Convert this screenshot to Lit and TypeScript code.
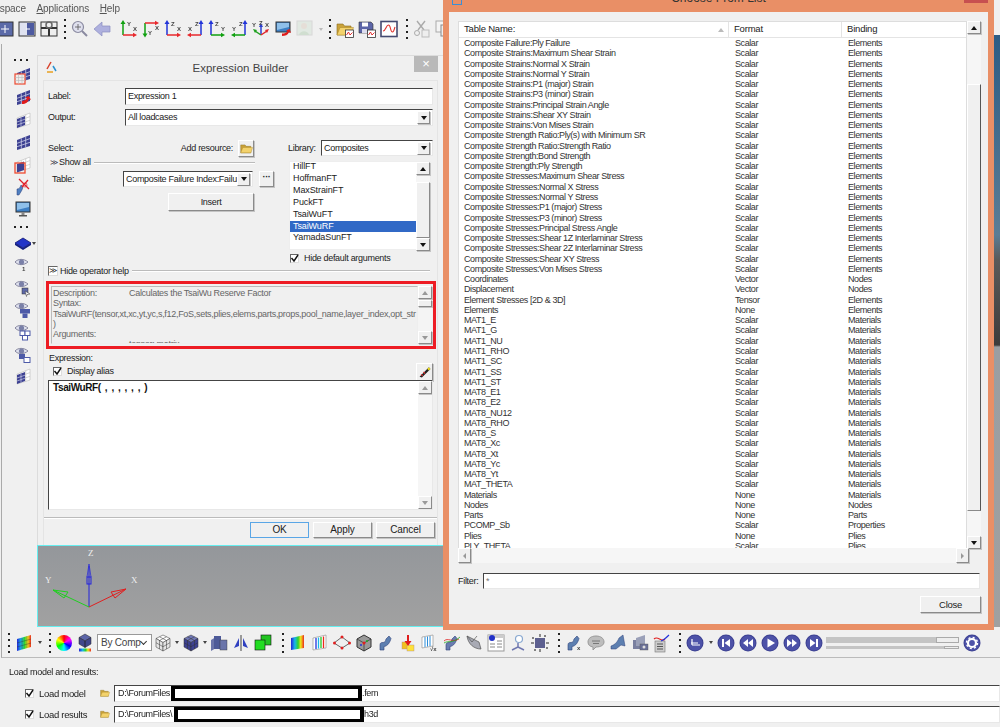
import { LitElement, html, css, svg } from "lit";
import { customElement } from "lit/decorators.js";

const BLUE = "#3d4192";

// ---- small icon helpers, all on an 18x18 box
const icon = (body: unknown, cls = "ico") => html`<svg class=${cls} viewBox="0 0 18 18">${body}</svg>`;

const mesh = (fill = BLUE, line = "#c9cbe6") => svg`
  <path d="M3 6L16 1V12L3 16Z" fill=${fill}/>
  <path d="M3 9.3L16 4.6M3 12.7L16 8.3M7.3 4.4V14.8M11.7 2.7V13.3" stroke=${line} stroke-width=".8" fill="none"/>`;

const ghost = svg`
  <path d="M3 6L16 1V12L3 16Z" fill="#fff" stroke="#bbb" stroke-width=".6"/>
  <path d="M3 9.3L16 4.6M3 12.7L16 8.3M7.3 4.4V14.8M11.7 2.7V13.3" stroke="#bbb" stroke-width=".6" fill="none"/>`;

const meshes = [
  icon(svg`${mesh()}<rect x="1" y="7" width="10" height="10" fill="#eee" stroke="#ee4a30" stroke-width="1.2"/><path d="M1 10.500H11M1 13.500H11M4.500 7V17M8 7V17" stroke="#bbb" stroke-width=".6"/>`),
  icon(svg`${mesh()}<path d="M8 15C12 15 14 13 15 10L17 11L15 7L11 8.500L13 9.500C12 11 10 12 8 12Z" fill="#e01c1c"/>`),
  icon(svg`${ghost}<path d="M3 7L11 4V13L3 16Z" fill=${BLUE}/><path d="M3 10L11 7.200M3 13L11 10.200M7 5.500V14.500" stroke="#c9cbe6" stroke-width=".7"/>`),
  icon(mesh()),
  icon(svg`${ghost}<path d="M3 8L10 5.500V14L3 16.500Z" fill=${BLUE}/><rect x="1" y="7" width="10" height="10" fill="none" stroke="#ee4a30" stroke-width="1.300"/>`),
];

const pipe = (c = "#5d7fb0") => svg`<path d="M3 16V11C3 9 4 8.500 6 8.500C8 8.500 8.500 7 9 5L12 2L14 4.500C13 8 11 12 7 12.500V16Z" fill=${c} stroke="#2d3f78" stroke-width=".6"/>`;

const monitor = (arrow = false) => icon(svg`
  <rect x="2" y="2" width="14" height="10" fill="#3d7fc4" stroke="#333" stroke-width="1"/>
  <path d="M3 3H15V7L3 10Z" fill="#8fc0ea"/>
  ${arrow
    ? svg`<path d="M8 16C11 16 14 15 15 12L17 13L15.500 9L12 10.500L13.500 11.200C12.500 13 10.500 13.500 8 13.500Z" fill="#e01c1c"/>`
    : svg`<rect x="7.500" y="12" width="3" height="3" fill="#888"/><rect x="5" y="15" width="8" height="1.500" fill="#555"/>`}`);

const eye = (extra: unknown = svg``) => icon(svg`
  <path d="M1 5C4 1.500 10 1.500 14 5C10 8.500 4 8.500 1 5Z" fill="#dfe1ee" stroke="#7a7a95" stroke-width=".9"/>
  <circle cx="7.500" cy="5" r="2.600" fill="#7a80a8"/>${extra}`);

const axis = (v: string, h: string, vl: string, hl: string, mode: number) => {
  // mode 0: up at left going right, 1: up at right going left, 2: down at left with top bar
  const t = (x: number, y: number, s: string) => svg`<text x=${x} y=${y} class="axl">${s}</text>`;
  if (mode === 0) return icon(svg`
    <path d="M3 15V3" stroke=${v} stroke-width="1.500"/><path d="M3 0L5.500 4H.5Z" fill=${v}/>
    <path d="M3 15H14" stroke=${h} stroke-width="1.500"/><path d="M17 15L13 12.700V17.300Z" fill=${h}/>
    ${t(7, 6, vl)}${t(13, 11, hl)}`);
  if (mode === 1) return icon(svg`
    <path d="M15 15V3" stroke=${v} stroke-width="1.500"/><path d="M15 0L17.500 4H12.500Z" fill=${v}/>
    <path d="M15 15H4" stroke=${h} stroke-width="1.500"/><path d="M1 15L5 12.700V17.300Z" fill=${h}/>
    ${t(9, 6, vl)}${t(2, 11, hl)}`);
  return icon(svg`
    <path d="M3 3V14" stroke=${v} stroke-width="1.500"/><path d="M3 17.500L.5 13.500H5.500Z" fill=${v}/>
    <path d="M3 3H14" stroke=${h} stroke-width="1.500"/><path d="M17 3L13 .7V5.300Z" fill=${h}/>
    ${t(6, 15, vl)}${t(13, 10, hl)}`);
};

const triad = icon(svg`
  <path d="M9 15V6" stroke="#2b3fd0" stroke-width="1.500"/><path d="M9 3L11 7H7Z" fill="#2b3fd0"/>
  <path d="M9 15L3 11" stroke="#1fa01f" stroke-width="1.500"/><path d="M9 15L15 11" stroke="#e0252a" stroke-width="1.500"/>
  <path d="M1 9L5 10L3 13Z" fill="#1fa01f"/><path d="M17 9L13 10L15 13Z" fill="#e0252a"/>
  <text x="0" y="7" class="axl">Y</text><text x="7" y="5" class="axl">Z</text><text x="13" y="7" class="axl">X</text>`);

const folder = (deco: unknown = svg``) => icon(svg`
  <path d="M1 4H7L8.500 6H15V15H1Z" fill="#c9a23a" stroke="#8a6d1e" stroke-width=".6"/>
  <path d="M1 15L4 7.500H17.500L15 15Z" fill="#f3d26c" stroke="#a98522" stroke-width=".5"/>${deco}`);

const miniChart = svg`<rect x="9.500" y="10" width="8" height="7.500" fill="#fff" stroke="#333" stroke-width=".8"/><path d="M10.500 15L12.500 12L14 15L16.500 12.500" stroke="#e01c1c" fill="none" stroke-width=".9"/>`;

const cube = (top: string, side: string, grid = false) => svg`
  <path d="M9 1L16 4.500L9 8.500L2 4.500Z" fill=${top} stroke="#333" stroke-width=".5"/>
  <path d="M2 4.500L9 8.500V17L2 13Z" fill=${side} stroke="#333" stroke-width=".5"/>
  <path d="M16 4.500L9 8.500V17L16 13Z" fill=${side} stroke="#333" stroke-width=".5"/>
  ${grid ? svg`<path d="M2 8.700L9 12.700L16 8.700M5.500 2.800L12.500 6.500M12.500 2.800L5.500 6.500M5.500 6.500V15M12.500 6.500V15" stroke="#333" stroke-width=".5" fill="none"/>` : svg``}`;

const rainbow = svg`<defs><linearGradient id="rb"><stop offset="0" stop-color="#2323d8"/><stop offset=".3" stop-color="#19b8e8"/><stop offset=".55" stop-color="#2fd12f"/><stop offset=".75" stop-color="#f2e51e"/><stop offset="1" stop-color="#ea2a1c"/></linearGradient></defs>`;

const media = (glyph: unknown) => icon(svg`
  <circle cx="9" cy="9" r="8.500" fill=${BLUE}/><circle cx="9" cy="9" r="7.500" fill="#4d52a8"/>${glyph}`, "ico round");

const rows: [string, string, string][] = [
  ...["Composite Failure:Ply Failure",
    ...["Maximum Shear", "Normal X", "Normal Y", "P1 (major)", "P3 (minor)"].map((n) => `Composite Strains:${n} Strain`),
    "Composite Strains:Principal Strain Angle", "Composite Strains:Shear XY Strain", "Composite Strains:Von Mises Strain",
    "Composite Strength Ratio:Ply(s) with Minimum SR", "Composite Strength Ratio:Strength Ratio",
    "Composite Strength:Bond Strength", "Composite Strength:Ply Strength",
    ...["Maximum Shear", "Normal X", "Normal Y", "P1 (major)", "P3 (minor)"].map((n) => `Composite Stresses:${n} Stress`),
    "Composite Stresses:Principal Stress Angle", "Composite Stresses:Shear 1Z Interlaminar Stress",
    "Composite Stresses:Shear 2Z Interlaminar Stress", "Composite Stresses:Shear XY Stress", "Composite Stresses:Von Mises Stress",
  ].map((n): [string, string, string] => [n, "Scalar", "Elements"]),
  ["Coordinates", "Vector", "Nodes"],
  ["Displacement", "Vector", "Nodes"],
  ["Element Stresses [2D & 3D]", "Tensor", "Elements"],
  ["Elements", "None", "Elements"],
  ...["MAT1_E", "MAT1_G", "MAT1_NU", "MAT1_RHO", "MAT1_SC", "MAT1_SS", "MAT1_ST", "MAT8_E1", "MAT8_E2", "MAT8_NU12",
    "MAT8_RHO", "MAT8_S", "MAT8_Xc", "MAT8_Xt", "MAT8_Yc", "MAT8_Yt", "MAT_THETA"]
    .map((n): [string, string, string] => [n, "Scalar", "Materials"]),
  ["Materials", "None", "Materials"],
  ["Nodes", "None", "Nodes"],
  ["Parts", "None", "Parts"],
  ["PCOMP_Sb", "Scalar", "Properties"],
  ["Plies", "None", "Plies"],
  ["PLY_THETA", "Scalar", "Plies"],
];

const library = ["HillFT", "HoffmanFT", "MaxStrainFT", "PuckFT", "TsaiWuFT", "TsaiWuRF", "YamadaSunFT"];

@customElement("app-root")
export class AppRoot extends LitElement {
  static styles = css`
    :host {
      display: block;
      width: 1000px;
      height: 727px;
      overflow: hidden;
      background: #f0f0f0;
      font: 9px/11px "Liberation Sans", Arial, sans-serif;
      letter-spacing: -0.3px;
      color: #222;
    }
    .screen { position: relative; width: 1000px; height: 727px; overflow: hidden; filter: blur(0.4px); }
    .ico { width: 18px; height: 18px; flex: none; display: block; overflow: visible; }
    .axl { font: bold 6px "Liberation Sans", sans-serif; fill: #444; letter-spacing: 0; }

    /* menu and top toolbar */
    .menu { height: 14px; display: flex; gap: 10.500px; align-items: center; margin-left: -23px; padding-top: 1px; font-size: 10px; color: #555; letter-spacing: -0.1px; }
    .menu u { text-decoration-thickness: 1px; }
    .tools { display: flex; align-items: center; gap: 4px; }
    .top { height: 28px; margin-left: -4px; }
    .sep { width: 2px; height: 20px; margin: 0 1px 0 2px; flex: none;
      background: repeating-linear-gradient(#222 0 2px, transparent 2px 6px); }
    .sep.wide { margin-left: 4px; }
    .sep.m5 { margin-left: 5px; }
    .sep.m6 { margin-left: 6px; }
    .arr { width: 0; height: 0; border: 2.5px solid transparent; border-top: 3px solid #444; border-bottom: 0; margin: 0 .5px; flex: none; }
    .arr.dim { border-top-color: #bbb; }
    .arr.tight { margin: 0 -1px; }
    .faded { opacity: .45; }
    .bump { margin-left: 1px; }

    /* work area */
    .work { height: 585px; display: flex; }
    .strip { width: 37px; border-left: 1px solid #aaa; margin-left: 1px; box-sizing: border-box; display: flex; flex-direction: column; align-items: center; gap: 4.2px; padding: 16px 0 0 6px; margin-top: 1px; }
    .hsep { width: 18px; height: 2px; flex: none; background: repeating-linear-gradient(90deg, #222 0 2px, transparent 2px 6px); margin: -1px 0 2px; }
    .hsep.mid { margin: 3px 0 3px; }
    .layer { display: flex; align-items: center; margin-left: 4px; }

    /* floating windows */
    .builder { position: absolute; left: 37px; top: 55px; width: 407px; height: 491px; box-sizing: border-box; background: #f0f0f0; border: 1px solid #dcdcdc; display: flex; flex-direction: column; }
    .titlebar { height: 24px; flex: none; display: flex; align-items: center; justify-content: center; font-size: 11.500px; letter-spacing: 0; color: #444; position: relative; }
    .logo { position: absolute; left: 7px; top: 5px; width: 13px; height: 13px; }
    .x { position: absolute; right: 5px; top: 0; width: 24px; height: 16px; background: #b9b9b9; color: #fff; font-size: 13px; line-height: 15px; text-align: center; }
    .panel { margin: 0 5px; padding: 7px 4px 0 4px; flex: 1; border: 1px solid #e4e4e4; border-bottom: none; display: flex; flex-direction: column; }
    .field { display: flex; align-items: center; }
    .field label { width: 77px; flex: none; }
    .sunken { background: #fff; border: 1px solid; border-color: #444 #e8e8e8 #e8e8e8 #444; box-sizing: border-box; padding: 0 2px; white-space: nowrap; overflow: hidden; }
    .input { height: 17px; line-height: 15px; flex: 1; }
    .combo { display: flex; align-items: center; justify-content: space-between; }
    .drop { width: 13px; height: 13px; flex: none; display: flex; align-items: center; justify-content: center; }
    .raised { background: #f0f0f0; border: 1px solid; border-color: #fff #8a8a8a #8a8a8a #fff; box-shadow: 1px 1px 0 #c4c4c4; box-sizing: border-box; }
    .down, .up, .lft, .rgt { width: 0; height: 0; border: 3px solid transparent; display: block; }
    .down { border-top: 4px solid #111; border-bottom: 0; }
    .up { border-bottom: 4px solid #111; border-top: 0; }
    .lft { border-right: 3px solid #999; border-left: 0; }
    .rgt { border-left: 3px solid #999; border-right: 0; }
    .mid-gap { margin-top: 4px; }

    .select { display: flex; margin-top: 14px; }
    .sel-l { width: 240px; flex: none; }
    .sel-r { width: 145px; flex: none; }
    .sel-row { display: flex; align-items: center; height: 16px; }
    .grow { flex: 1; }
    .pad34 { width: 34px; flex: none; }
    .btn-ico { width: 16px; height: 17px; flex: none; display: flex; align-items: center; justify-content: center; margin-left: 5px; }
    .btn-ico .ico { width: 13px; height: 13px; }
    .show { height: 11px; margin: 1px 0 3px 2px; display: flex; align-items: center; }
    .chev { width: 9px; flex: none; font-size: 8px; color: #334; }
    .groove { flex: 1; height: 0; border-top: 1px solid #bbb; border-bottom: 1px solid #fff; margin-left: 3px; }
    .show .groove { margin-right: 33px; }
    .hide-op .groove { margin-right: 3px; }
    .tbl { display: flex; align-items: center; height: 16px; }
    .tl { width: 75px; flex: none; padding-left: 4px; box-sizing: border-box; }
    .tbl .sunken { width: 130px; height: 16px; line-height: 14px; flex: none; }
    .tbl .sunken b { font-weight: normal; flex: 1; overflow: hidden; }
    .more { width: 15px; height: 16px; margin-left: 6px; text-align: center; font-weight: bold; line-height: 11px; flex: none; }
    .insert { width: 86px; height: 18px; margin: 6px 0 0 120px; text-align: center; line-height: 16px; }
    .lib-l { width: 33px; flex: none; }
    .lib .sunken { width: 112px; height: 16px; line-height: 14px; }
    .list { height: 87px; margin: 5px 2px 0 1px; display: flex; border: 1px solid #eee; background: #fff; }
    .list ul { margin: -1px 0 0; padding: 0 0 0 3px; list-style: none; flex: 1; letter-spacing: -0.1px; line-height: 11.900px; }
    .list li.on { background: #3169c6; color: #fff; margin-left: -3px; padding-left: 3px; }
    .sb { width: 14px; flex: none; display: flex; flex-direction: column; justify-content: space-between; background: #f6f6f6; box-sizing: border-box; }
    .sb-b { height: 13px; display: flex; align-items: center; justify-content: center; flex: none; }
    .sb-thumb { height: 56px; flex: none; margin: 7px 0 auto; }
    .chk { display: flex; align-items: center; gap: 5px; height: 10px; }
    .box { width: 9px; height: 9px; box-sizing: border-box; border: 1px solid; border-color: #666 #ddd #ddd #666; background: #fff; flex: none; }
    .box svg { display: block; width: 9px; height: 9px; margin: -1px; }
    .hide-def { margin: 3px 0 0 2px; }
    .hide-op { display: flex; align-items: center; height: 10px; margin-top: 3px; }
    .hide-op .box { width: 10px; height: 10px; margin-right: 2px; text-align: center; font-size: 8px; line-height: 7px; }

    .frame { margin: 5px -3px 0 -2px; height: 68px; flex: none; box-sizing: border-box; border: 3px solid #ed1c24; padding: 2px 1px 2px 2px; display: flex; }
    .help { flex: 1; overflow: hidden; border: 1px solid; border-color: #bbb #eee #eee #bbb; color: #666; padding: 1px 1px; line-height: 10.300px; white-space: nowrap; min-width: 0; letter-spacing: -0.3px; }
    .help i { font-style: normal; display: inline-block; width: 76px; }
    .frame .sb { background: #f4f4f4; }
    .frame .sb-thumb { height: 7px; margin-top: 1px; }
    .frame .up { border-bottom-color: #999; }
    .frame .down { border-top-color: #999; }
    .expr-label { margin: 4px 0 0 1px; height: 10px; }
    .expr-head { display: flex; align-items: center; height: 17px; padding-left: 5px; }
    .pen { width: 17px; height: 18px; flex: none; margin-left: auto; display: flex; align-items: center; justify-content: center; }
    .pen .ico { width: 14px; height: 14px; }
    .area { height: 130px; flex: none; display: flex; padding: 0; }
    .code { flex: 1; padding: 1px 4px; font: bold 10px/11px "Liberation Sans", sans-serif; letter-spacing: -0.4px; word-spacing: 1.800px; color: #111; }
    .area .sb-b { height: 13px; }
    .area .sb-thumb { visibility: hidden; }
    .area .up { border-bottom-color: #999; }
    .area .down { border-top-color: #999; }
    .groove-h { height: 0; border-top: 1px solid #bbb; border-bottom: 1px solid #fff; margin: 7px -4px 0 -4px; }
    .actions { display: flex; justify-content: flex-end; gap: 4px; margin: 3px -2px 0 0; }
    .actions .raised { width: 59px; height: 16px; text-align: center; line-height: 14px; font-size: 10px; letter-spacing: -0.1px; }
    .actions .ok { border-color: #5aa6e6; box-shadow: none; }

    .view { position: absolute; left: 37px; top: 545px; width: 407px; height: 82px; box-sizing: border-box; border: 1px solid #66eef0; border-right: none; background: linear-gradient(#94979b, #a1a1a1); }
    .view svg { display: block; width: 100px; height: 80px; }
    .view text { font: 9px "Liberation Serif", serif; fill: #eee; }

    .choose { position: absolute; left: 443px; top: -12px; width: 551px; height: 642px; box-sizing: border-box; background: #e98f66; padding: 24px 6px 6px 6px; }
    .ch-title { position: absolute; left: 0; right: 0; top: 5px; text-align: center; font-size: 12px; letter-spacing: 0; color: #333; height: 19px; }
    .ch-red { position: absolute; right: 6px; top: 0; width: 24px; height: 15px; background: #c75050; }
    .ch-logo { position: absolute; left: 9px; top: 9px; width: 10px; height: 8px; border: 1px solid #3a8fd6; border-top-color: #e0a020; box-sizing: border-box; }
    .ch-in { height: 100%; background: #f0f0f0; padding: 9px 7px 0 9px; box-sizing: border-box; display: flex; flex-direction: column; }
    .tbl-wrap { height: 542px; width: 523px; display: flex; flex: none; }
    .table { flex: 1; height: 527px; background: #fff; border: 1px solid #ddd; border-bottom: none; box-sizing: border-box; overflow: hidden; min-width: 0; }
    .thead { display: grid; grid-template-columns: 270px 113px 1fr; height: 15px; border-bottom: 1px solid #e4e4e4; font-size: 9.500px; line-height: 14px; letter-spacing: -0.2px; }
    .thead div { padding-left: 5px; border-right: 1px solid #e4e4e4; position: relative; }
    .thead div:last-child { border: none; }
    .sort { position: absolute; right: 4px; top: 6px; width: 0; height: 0; border: 3.500px solid transparent; border-bottom: 4px solid #bbb; border-top: 0; }
    .tr { display: grid; grid-template-columns: 271px 113px 1fr; height: 10.270px; line-height: 10.270px; padding-left: 5px; white-space: nowrap; color: #333; letter-spacing: -0.42px; }
    .vs { height: 528px; flex: none; }
    .vs .sb-thumb { height: 427px; margin: 25px 0 0; border-right: 1px solid #555; background: #f0f0f0; box-shadow: none; }
    .hs { height: 15px; width: 511px; flex: none; display: flex; justify-content: space-between; background: #f6f6f6; margin-top: -15px; }
    .hs .sb-b { width: 13px; height: 15px; }
    .filter { display: flex; align-items: center; margin-top: 10px; height: 16px; }
    .filter span { width: 25px; flex: none; }
    .filter .sunken { flex: 1; height: 16px; margin-right: 1px; line-height: 14px; color: #777; }
    .close { width: 61px; height: 17px; margin: 7px 0 0 auto; text-align: center; line-height: 15px; font-size: 9.500px; }

    .outside { position: absolute; left: 994px; top: 35px; width: 6px; height: 592px; background: linear-gradient(#2c5c85 0, #5b7d96 200px, #5a5a5a 225px, #3c3c3c 310px, #9a9ea2 312px, #a0a0a0 100%); }

    /* bottom */
    .bottom { height: 29px; border-bottom: 1px solid #bbb; border-left: 1px solid #aaa; margin-left: 1px; box-sizing: content-box; padding-left: 4px; position: relative; }
    .bottom .gp2 { margin-left: 3px; }
    .wheel { width: 16px; height: 16px; border-radius: 50%; flex: none; background: conic-gradient(#f00, #f0f 17%, #00f 33%, #0ff 50%, #0f0 67%, #ff0 83%, #f00); }
    .bycomp { width: 55px; height: 17px; box-sizing: border-box; border: 1px solid #999; background: #fff; font-size: 10px; padding: 0 3px; display: flex; align-items: center; justify-content: space-between; flex: none; color: #444; white-space: nowrap; margin: 0 -2px 0 -1px; letter-spacing: -0.2px; }
    .chevd { width: 4px; height: 4px; border: solid #333; border-width: 0 1px 1px 0; transform: rotate(45deg); margin: -2px 2px 0 0; }
    .round { width: 18px; height: 18px; }
    .sliders { width: 133px; flex: none; display: flex; flex-direction: column; gap: 3px; margin-left: -1px; }
    .slider { background: #c4c4c4; display: flex; justify-content: flex-end; }
    .slider.a { height: 6px; }
    .slider.b { height: 3px; }
    .slider span { display: block; background: #eee; border: 1px solid #aaa; box-sizing: border-box; }
    .slider.a span { width: 23px; }
    .slider.b span { width: 15px; }

    .load { padding: 9px 0 0 9px; }
    .load-row { display: flex; align-items: center; height: 18px; margin-left: 16px; font-size: 9.500px; }
    .load-row .box { margin-right: 5px; }
    .lb { width: 61px; flex: none; }
    .load-row .ico { width: 10px; height: 10px; }
    .path { margin-left: 4px; flex: 1; height: 17px; line-height: 15px; padding-left: 3px; display: flex; align-items: center; font-size: 9px; letter-spacing: -0.35px; }
    .path b { font-weight: normal; flex: none; }
    .w53 { width: 53px; }
    .w56 { width: 56px; }
    .redact { width: 191px; height: 17px; box-sizing: border-box; border: 4px solid #000; background: #fff; flex: none; }
    .redact.b2 { width: 190px; height: 15px; border-width: 3px 4px; }
    .first { margin-top: 6px; }
    .second { margin-top: 3px; }
  `;

  private tick() {
    return html`<span class="box"><svg viewBox="0 0 9 9"><path d="M1.500 4L4 7L8 1" stroke="#111" stroke-width="1.400" fill="none"/></svg></span>`;
  }

  private sbar(cls = "") {
    return html`<div class="sb ${cls}">
      <div class="sb-b raised"><span class="up"></span></div>
      <div class="sb-thumb raised"></div>
      <div class="sb-b raised"><span class="down"></span></div>
    </div>`;
  }

  private topBar() {
    return html`<div class="tools top">
      ${icon(svg`<rect x="1" y="2" width="16" height="14" fill="#5b6aa8" stroke="#333"/><path d="M5 9H13M9 5V13" stroke="#fff"/>`)}
      ${icon(svg`<rect x="1" y="2" width="16" height="14" fill="#dfe2f0" stroke="#333"/><rect x="9" y="3" width="7" height="12" fill="#4d5aa0"/><path d="M8 9H12" stroke="#fff"/>`)}
      ${icon(svg`<rect x="1" y="2" width="16" height="14" fill="#eee" stroke="#333"/><path d="M9 8V16M1 8H17" stroke="#333" stroke-width="2"/><circle cx="9" cy="5" r="3" fill="none" stroke="#666" stroke-width="1.500"/>`)}
      <span class="sep"></span>
      ${icon(svg`<circle cx="7" cy="7" r="5.500" fill="#dfe0ee" stroke="#8a8aa0" stroke-width="1.200"/><path d="M11 11L16 16" stroke="#8a8aa0" stroke-width="2"/><path d="M4 7H10M7 4V10" stroke="#555" stroke-width=".8"/>`)}
      ${icon(svg`<path d="M1 9L9 2V6H17V12H9V16Z" fill="#aeb0de" stroke="#8a8cc0" stroke-width=".7"/>`)}
      <span class="bump"></span>
      ${axis("#10a010", "#e8282c", "Y", "X", 0)}
      ${axis("#10a010", "#e8282c", "Y", "X", 2)}
      ${axis("#2234d8", "#e8282c", "Z", "X", 0)}
      ${axis("#2234d8", "#e8282c", "Z", "X", 1)}
      ${axis("#2234d8", "#10a010", "Z", "Y", 0)}
      ${axis("#2234d8", "#10a010", "Z", "Y", 1)}
      ${triad}
      ${monitor(true)}
      ${icon(svg`<rect x="1" y="1" width="15" height="14" fill="#cfe0d0" stroke="#bbb"/><circle cx="8" cy="6" r="3" fill="#d8c8b8"/><path d="M3 15C4 10 12 10 13 15Z" fill="#a8c8a8"/>`, "ico faded")}
      <span class="arr dim"></span>
      <span class="sep"></span>
      ${folder(miniChart)}
      ${icon(svg`<path d="M1 2H13L15 4V13H1Z" fill="#5c65a8" stroke="#333" stroke-width=".6"/><rect x="4" y="2.500" width="6" height="4" fill="#fff"/><rect x="4" y="9" width="5" height="4" fill="#dde"/>${miniChart}`)}
      ${icon(svg`<rect x="1" y="1.500" width="16" height="15" fill="#fff" stroke="#444a70" stroke-width="1.600"/><path d="M3 11C6 11 6 5 8.500 5C11 5 10 12 12.500 12C14 12 14.500 8 15 7" stroke="#e0302a" fill="none" stroke-width="1.100"/>`)}
      <span class="sep wide"></span>
      ${icon(svg`<path d="M4 1L11 10M12 1L5 10" stroke="#aaa" stroke-width="1.400"/><circle cx="4" cy="13" r="2.500" fill="none" stroke="#aaa"/><rect x="9" y="10" width="7" height="7" fill="#eee" stroke="#bbb"/>`, "ico")}
      ${icon(svg`<rect x="1" y="1" width="9" height="11" fill="#f4f4f4" stroke="#aaa"/><rect x="6" y="5" width="9" height="11" fill="#eee" stroke="#888"/>`)}
    </div>`;
  }

  private leftStrip() {
    return html`<div class="strip">
      <span class="hsep"></span>
      ${meshes}
      ${icon(svg`<path d="M3 17V11C5 11 6 10 7 7L9 9C8 13 6 15 5 17Z" fill="#4f7fc0" stroke="#2d3f78" stroke-width=".5"/><path d="M5 1L15 11M14 2L8 9" stroke="#e0202a" stroke-width="1.300"/><circle cx="11" cy="7" r="2" fill="none" stroke="#e0202a" stroke-width=".7"/>`)}
      ${monitor()}
      <span class="hsep mid"></span>
      <div class="layer">
        ${icon(svg`<path d="M9 3L17 8L9 13L1 8Z" fill="#2234c8" stroke="#111870" stroke-width=".8"/><path d="M1 8V10L9 15L17 10V8L9 13Z" fill="#141f80"/>`)}
        <span class="arr"></span>
      </div>
      ${eye(svg`<text x="8" y="14" class="axl">1</text>`)}
      ${eye(svg`<rect x="8" y="9" width="6" height="6" fill="#5d68a8" stroke="#333" stroke-width=".5"/><path d="M11 12L16 15L13 15.500L12.500 17.500Z" fill="#fff" stroke="#333" stroke-width=".5"/>`)}
      ${eye(svg`<rect x="6" y="8" width="5" height="4.500" fill="#4d5aa8"/><rect x="11" y="8" width="5" height="4.500" fill="#4d5aa8"/><rect x="8.500" y="12.500" width="5" height="4.500" fill="#4d5aa8"/>`)}
      ${eye(svg`<rect x="6" y="8" width="5" height="4.500" fill="#fff" stroke="#4d5aa8"/><rect x="11" y="8" width="5" height="4.500" fill="#fff" stroke="#4d5aa8"/><rect x="8.500" y="12.500" width="5" height="4.500" fill="#fff" stroke="#4d5aa8"/>`)}
      ${eye(svg`<rect x="5" y="8" width="6" height="5" fill="#4d5aa8"/><rect x="10" y="11.500" width="6" height="5" fill="#fff" stroke="#4d5aa8"/>`)}
      ${icon(svg`${ghost}<path d="M3 7L11 4V13L3 16Z" fill=${BLUE}/><path d="M3 10L11 7.200M3 13L11 10.200M7 5.500V14.500" stroke="#c9cbe6" stroke-width=".7"/>`)}
    </div>`;
  }

  private builder() {
    return html`<section class="builder">
      <div class="titlebar">
        <svg class="logo" viewBox="0 0 13 13"><path d="M6 1L2 8" stroke="#d8402a" stroke-width="1.500"/><path d="M2 11H8" stroke="#e8a020" stroke-width="1.500"/><path d="M8 5L11 10" stroke="#2a90d0" stroke-width="1.500"/></svg>
        Expression Builder
        <span class="x">×</span>
      </div>
      <div class="panel">
        <div class="field"><label>Label:</label><div class="sunken input">Expression 1</div></div>
        <div class="field mid-gap">
          <label>Output:</label>
          <div class="sunken input combo">All loadcases<span class="drop raised"><span class="down"></span></span></div>
        </div>
        <div class="select">
          <div class="sel-l">
            <div class="sel-row">
              <span>Select:</span><span class="grow"></span><span>Add resource:</span>
              <span class="btn-ico raised">${folder()}</span><span class="pad34"></span>
            </div>
            <div class="show"><span class="chev">≫</span><span>Show all</span><span class="groove"></span></div>
            <div class="tbl">
              <span class="tl">Table:</span>
              <div class="sunken combo"><b>Composite Failure Index:Failure</b><span class="drop raised"><span class="down"></span></span></div>
              <span class="more raised">···</span>
            </div>
            <div class="insert raised">Insert</div>
          </div>
          <div class="sel-r lib">
            <div class="sel-row">
              <span class="lib-l">Library:</span>
              <div class="sunken combo">Composites<span class="drop raised"><span class="down"></span></span></div>
            </div>
            <div class="list">
              <ul>${library.map((l) => html`<li class=${l === "TsaiWuRF" ? "on" : ""}>${l}</li>`)}</ul>
              ${this.sbar()}
            </div>
            <div class="chk hide-def">${this.tick()}Hide default arguments</div>
          </div>
        </div>
        <div class="hide-op"><span class="box">≫</span>Hide operator help<span class="groove"></span></div>
        <div class="frame">
          <div class="help">
            <div><i>Description:</i>Calculates the TsaiWu Reserve Factor</div>
            <div>Syntax:</div>
            <div>TsaiWuRF(tensor,xt,xc,yt,yc,s,f12,FoS,sets,plies,elems,parts,props,pool_name,layer_index,opt_str</div>
            <div>)</div>
            <div>Arguments:</div>
            <div><i></i>tensor: matrix</div>
          </div>
          ${this.sbar()}
        </div>
        <div class="expr-label">Expression:</div>
        <div class="expr-head">
          <div class="chk">${this.tick()}Display alias</div>
          <span class="pen raised">${icon(svg`<path d="M2 15L14 3L16 5L5 16Z" fill="#222"/><path d="M12 5L14 3L16 5L14 7Z" fill="#f0e020"/><path d="M4 12L6 14M7 9L9 11" stroke="#e03030" stroke-width="1.500"/>`)}</span>
        </div>
        <div class="area sunken">
          <div class="code">TsaiWuRF( , , , , , , )</div>
          ${this.sbar()}
        </div>
        <div class="groove-h"></div>
        <div class="actions">
          <div class="raised ok">OK</div>
          <div class="raised">Apply</div>
          <div class="raised">Cancel</div>
        </div>
      </div>
    </section>
    <section class="view">
      <svg viewBox="0 0 100 80">
        <text x="50" y="10">Z</text><text x="7" y="37">Y</text><text x="93" y="37">X</text>
        <path d="M51 61V20" stroke="#2222dd"/>
        <rect x="49" y="31" width="4" height="7" fill="none" stroke="#2222dd"/>
        <path d="M49 31L51 18L53 31" fill="none" stroke="#2222dd" stroke-width=".7"/>
        <path d="M51 61L15 44" stroke="#1fd01f"/><path d="M15 44L30 46L26 52Z" fill="none" stroke="#1fd01f"/>
        <path d="M51 61L88 43" stroke="#e02020"/><path d="M88 43L73 46L77 52Z" fill="none" stroke="#e02020"/>
      </svg>
    </section>`;
  }

  private chooser() {
    return html`<section class="choose">
      <span class="ch-logo"></span>
      <div class="ch-title">Choose From List</div>
      <span class="ch-red"></span>
      <div class="ch-in">
        <div class="tbl-wrap">
          <div class="table">
            <div class="thead">
              <div>Table Name:<span class="sort"></span></div><div>Format</div><div>Binding</div>
            </div>
            ${rows.map((r) => html`<div class="tr"><span>${r[0]}</span><span>${r[1]}</span><span>${r[2]}</span></div>`)}
          </div>
          ${this.sbar("vs")}
        </div>
        <div class="hs">
          <div class="sb-b raised"><span class="lft"></span></div>
          <div class="sb-b raised"><span class="rgt"></span></div>
        </div>
        <div class="filter"><span>Filter:</span><div class="sunken">*</div></div>
        <div class="close raised">Close</div>
      </div>
    </section>`;
  }

  private bottomBar() {
    const play = (d: string) => media(svg`<path d=${d} fill="#fff"/>`);
    return html`<div class="tools bottom">
      <span class="sep"></span>
      ${icon(svg`${rainbow}<path d="M2 5L16 1V13L2 17Z" fill="url(#rb)"/><path d="M2 9L16 5M2 13L16 9M7 4V15M12 2V14" stroke="#333" stroke-width=".4"/>`)}
      <span class="arr"></span>
      <span class="sep gp2"></span>
      <span class="wheel"></span>
      ${icon(svg`<path d="M9 0L15 3.500L9 7L3 3.500Z" fill="#5c65a8" stroke="#222" stroke-width=".5"/><path d="M3 3.500V10L9 13.500V7ZM15 3.500V10L9 13.500V7Z" fill="#41478c" stroke="#222" stroke-width=".5"/>${rainbow}<rect x="3" y="14.500" width="12" height="3" fill="url(#rb)"/>`)}
      <div class="bycomp">By Comp<span class="chevd"></span></div>
      ${icon(cube("#fff", "#e4e4e4", true))}
      <span class="arr tight"></span>
      ${icon(cube("#7078b8", BLUE, true))}
      <span class="arr tight"></span>
      ${icon(svg`<path d="M1 6L6 3V14L1 17Z" fill="#6a74aa"/><rect x="4" y="2" width="7" height="13" fill="#4d5a98"/><rect x="10" y="6" width="7" height="10" fill="#6a74aa" stroke="#333" stroke-width=".4"/>`)}
      ${icon(svg`<path d="M2 14L7 12V4Z" fill="#3040c0"/><path d="M9 1V17" stroke="#444"/><path d="M16 14L11 12V4Z" fill="#3040c0"/>`)}
      ${icon(svg`<rect x="7" y="1" width="10" height="10" fill="#22c422" stroke="#111" stroke-width=".6"/><rect x="1" y="6" width="10" height="10" fill="#22dd22" stroke="#111" stroke-width=".6"/>`)}
      <span class="sep m6"></span>
      ${icon(svg`${rainbow}<path d="M2 4L15 1V14L2 16Z" fill="url(#rb)"/>`)}
      ${icon(svg`${rainbow}<path d="M2 4L15 1V14L2 16Z" fill="#fff" stroke="#888" stroke-width=".6"/><path d="M5 4V15" stroke="#2233dd" stroke-width="1.300"/><path d="M7.500 3.500V14.500" stroke="#19b8e8" stroke-width="1.300"/><path d="M10 3V14" stroke="#22c422" stroke-width="1.300"/><path d="M12.500 2.500V14" stroke="#ea2a1c" stroke-width="1.300"/>`)}
      ${icon(svg`<path d="M1 9L9 3L17 9L9 14Z" fill="none" stroke="#666"/><circle cx="9" cy="3" r="1.500" fill="#e02020"/><circle cx="1.500" cy="9" r="1.500" fill="#e02020"/><circle cx="16.500" cy="9" r="1.500" fill="#e02020"/><circle cx="9" cy="14" r="1.500" fill="#e02020"/>`)}
      ${icon(svg`<path d="M9 1L16 5V13L9 17L2 13V5Z" fill="#999" stroke="#333"/><path d="M2 5L9 9L16 5M9 9V17" stroke="#333" stroke-width=".7" fill="none"/><circle cx="9" cy="9" r="1.500" fill="#e02020"/><circle cx="6" cy="11" r="1" fill="#2233dd"/><circle cx="12" cy="7" r="1" fill="#22aa22"/>`)}
      ${icon(pipe())}
      ${icon(svg`<rect x="3" y="8" width="7" height="7" fill="#f2c21e" stroke="#a88" stroke-width=".4"/><rect x="8" y="11" width="7" height="6" fill="#ffe23a" stroke="#a88" stroke-width=".4"/><path d="M9 1V8" stroke="#e01c1c" stroke-width="2"/><path d="M5.500 7H12.500L9 12Z" fill="#e01c1c"/>`)}
      ${icon(svg`<path d="M1 3L12 1V12L1 14Z" fill="#fff" stroke="#888" stroke-width=".6"/><path d="M4 3V13M6.500 2.500V12.500M9 2V12" stroke="#2a8cd8" stroke-width="1"/><text x="9" y="17" class="axl">√x</text>`)}
      ${icon(svg`${pipe("#6a7cb0")}<path d="M1 7C5 3 9 9 16 5" stroke="#e02020" fill="none" stroke-width=".8"/><path d="M1 9C6 6 9 10 17 3" stroke="#22aa22" fill="none" stroke-width=".8"/>`)}
      ${icon(svg`<path d="M2 2C3 10 9 15 16 15L14 8Z" fill="#a8aab4" stroke="#555" stroke-width=".7"/><path d="M7 8L2 2M7 8L12 2" stroke="#555" stroke-width=".7"/>`)}
      ${icon(svg`<rect x="1" y="1" width="16" height="16" fill="#fff" stroke="#999"/><rect x="1" y="1" width="16" height="3" fill="#ccc"/><circle cx="5" cy="4" r="3" fill="#2232c8"/><path d="M10 7H15M10 10H15M10 13H15M3 10H8M3 13H8" stroke="#888"/>`)}
      ${icon(svg`<path d="M9 9V13L3 16M9 13L15 16" stroke="#7078b0" stroke-width="1.500" fill="none"/><circle cx="10" cy="5" r="3.500" fill="#fff" stroke="#88a8d0" stroke-width="1.200"/>`)}
      ${icon(svg`<rect x="4" y="4" width="10" height="10" fill="#5c5f8f"/><path d="M9 0V18M0 9H18" stroke="#111" stroke-width=".9" stroke-dasharray="3 12"/><path d="M14 1V3M4 15V17M1 4H3M15 14H17" stroke="#111"/>`)}
      <span class="sep m5"></span>
      ${icon(svg`${pipe()}<text x="12" y="16" class="axl">x</text>`)}
      ${icon(svg`<path d="M9 2C14 2 17 4.500 17 8C17 11 14 13 9 13L6 16V13C3 12.500 1 11 1 8C1 4.500 4 2 9 2Z" fill="#bdbdbd" stroke="#999"/><path d="M5 7H13M6 9.500H12" stroke="#777"/>`)}
      ${icon(svg`<path d="M2 15V12C5 11 8 9 10 4L14 1L16 12L12 11L7 15Z" fill="#5d7fb0" stroke="#2d3f78" stroke-width=".5"/>`)}
      ${icon(svg`<rect x="2" y="6" width="9" height="9" fill="#7a80a0"/><path d="M5 4L14 1V12H5Z" fill="#9aa0b8"/><rect x="9" y="10" width="8" height="6" fill="#6a7098" stroke="#555" stroke-width=".4"/><circle cx="13" cy="13" r="1.500" fill="#ddd"/>`)}
      ${icon(svg`<rect x="2" y="7" width="10" height="11" fill="#ccc" stroke="#777" stroke-width=".6"/><path d="M4 10H10M4 12.500H10M4 15H10" stroke="#555"/><path d="M1 5C5 1 8 9 12 5" stroke="#e02020" fill="none" stroke-width="1.200"/><path d="M8 7C11 6 13 4 16 1" stroke="#2233dd" fill="none" stroke-width="1.200"/>`)}
      <span class="sep wide"></span>
      ${media(svg`<path d="M5 9H12M6 11H14M6 5V11" stroke="#fff" stroke-width="1.200" fill="none"/>`)}
      <span class="arr"></span>
      ${play("M5 5H7V13H5ZM13 5V13L7.500 9Z")}
      ${play("M9 5V13L4 9ZM14 5V13L9 9Z")}
      ${play("M6.500 4.500V13.500L14 9Z")}
      ${play("M4 5V13L9 9ZM9 5V13L14 9Z")}
      ${play("M5 5V13L10.500 9ZM11 5H13V13H11Z")}
      <div class="sliders">
        <div class="slider a"><span></span></div>
        <div class="slider b"><span></span></div>
      </div>
      ${media(svg`<circle cx="9" cy="9" r="4" fill="none" stroke="#fff" stroke-width="2.200"/><circle cx="9" cy="9" r="5.500" fill="none" stroke="#fff" stroke-width="1.400" stroke-dasharray="2 2.320"/>`)}
    </div>`;
  }

  render() {
    return html`<div class="screen">
      <div class="menu"><span>Workspace</span><span><u>A</u>pplications</span><span><u>H</u>elp</span></div>
      ${this.topBar()}
      <div class="work">${this.leftStrip()}</div>
      ${this.bottomBar()}
      <div class="load">
        Load model and results:
        <div class="load-row first">
          ${this.tick()}<span class="lb">Load model</span>${folder()}
          <div class="path sunken"><b class="w53">D:\\ForumFiles</b><span class="redact"></span><b>.fem</b></div>
        </div>
        <div class="load-row second">
          ${this.tick()}<span class="lb">Load results</span>${folder()}
          <div class="path sunken"><b class="w56">D:\\ForumFiles\\</b><span class="redact b2"></span><b>h3d</b></div>
        </div>
      </div>
      ${this.builder()}
      <div class="outside"></div>
      ${this.chooser()}
    </div>`;
  }
}

declare global {
  interface HTMLElementTagNameMap {
    "app-root": AppRoot;
  }
}
